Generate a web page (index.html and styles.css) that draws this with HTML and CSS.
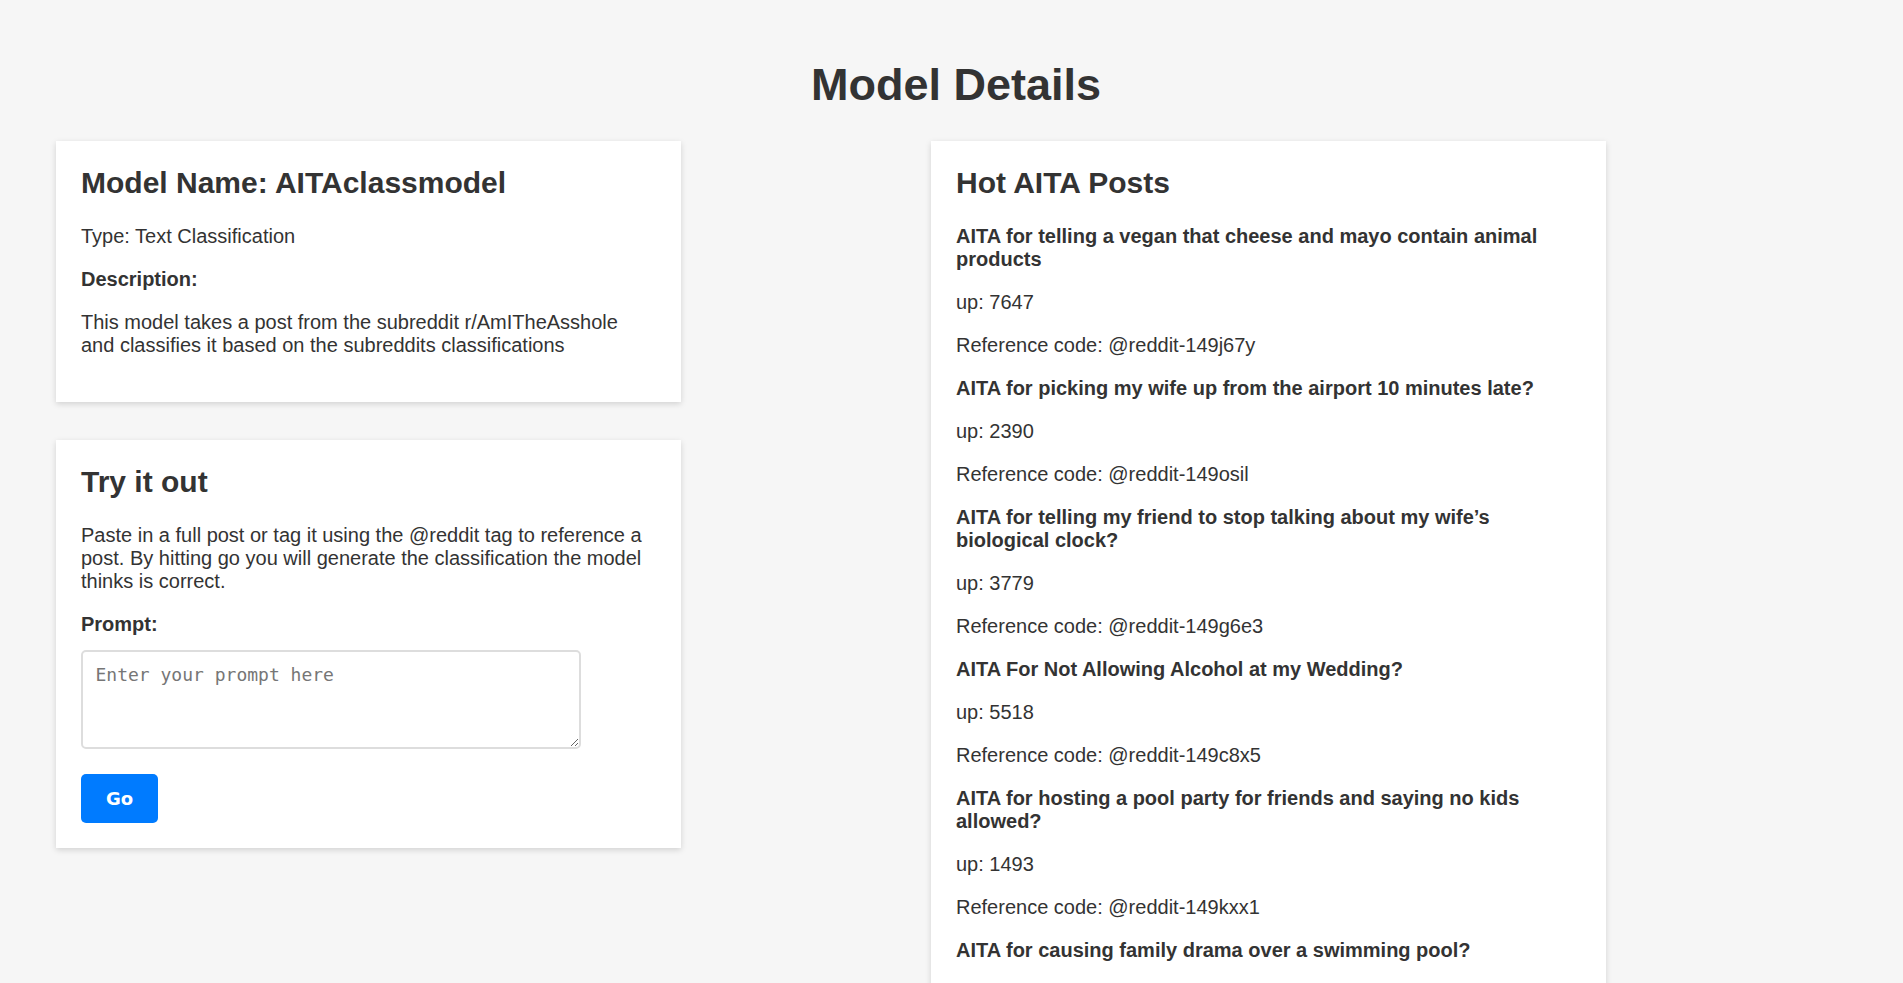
FILE: index.html
```html
<!DOCTYPE html>
<html lang="en">
<head>
<meta charset="utf-8">
<title>Model Details</title>
<link rel="stylesheet" href="styles.css">
</head>
<body>
  <h1 class="page-title">Model Details</h1>
  <main class="layout">
    <div class="left-col">
      <section class="card">
        <h2 class="card-title">Model Name: AITAclassmodel</h2>
        <p class="text">Type: Text Classification</p>
        <p class="text bold">Description:</p>
        <p class="text">This model takes a post from the subreddit r/AmITheAsshole and classifies it based on the subreddits classifications</p>
      </section>
      <section class="card">
        <h2 class="card-title">Try it out</h2>
        <p class="text">Paste in a full post or tag it using the @reddit tag to reference a post. By hitting go you will generate the classification the model thinks is correct.</p>
        <label class="prompt-label" for="prompt">Prompt:</label>
        <textarea id="prompt" class="prompt-input" placeholder="Enter your prompt here"></textarea>
        <button class="go-btn" type="button">Go</button>
      </section>
    </div>
    <section class="card posts-card">
      <h2 class="card-title">Hot AITA Posts</h2>
      <p class="text bold">AITA for telling a vegan that cheese and mayo contain animal products</p>
      <p class="text">up: 7647</p>
      <p class="text">Reference code: @reddit-149j67y</p>
      <p class="text bold">AITA for picking my wife up from the airport 10 minutes late?</p>
      <p class="text">up: 2390</p>
      <p class="text">Reference code: @reddit-149osil</p>
      <p class="text bold">AITA for telling my friend to stop talking about my wife’s biological clock?</p>
      <p class="text">up: 3779</p>
      <p class="text">Reference code: @reddit-149g6e3</p>
      <p class="text bold">AITA For Not Allowing Alcohol at my Wedding?</p>
      <p class="text">up: 5518</p>
      <p class="text">Reference code: @reddit-149c8x5</p>
      <p class="text bold">AITA for hosting a pool party for friends and saying no kids allowed?</p>
      <p class="text">up: 1493</p>
      <p class="text">Reference code: @reddit-149kxx1</p>
      <p class="text bold">AITA for causing family drama over a swimming pool?</p>
    </section>
  </main>
</body>
</html>
```
FILE: styles.css
```css
html {
  scrollbar-width: none;
}

body {
  margin: 0;
  padding-top: 59px;
  background: #f6f6f6;
  color: #333333;
  font-family: "Liberation Sans", Arial, sans-serif;
}

.page-title {
  margin: 0 0 30px;
  padding-left: 9px;
  text-align: center;
  font-size: 45px;
  font-weight: bold;
  line-height: normal;
}

.layout {
  display: flex;
  align-items: flex-start;
  gap: 250px;
  padding-left: 56px;
}

.left-col {
  display: flex;
  flex-direction: column;
  gap: 37.5px;
  width: 625px;
}

.card {
  box-sizing: border-box;
  background: #ffffff;
  padding: 25px;
  box-shadow: 0 2px 6px rgba(0, 0, 0, 0.15);
}

.posts-card {
  width: 675px;
}

.card-title {
  margin: 0 0 25px;
  font-size: 30px;
  font-weight: bold;
  line-height: normal;
}

.text {
  margin: 20px 0;
  font-size: 20px;
  line-height: normal;
}

.bold {
  font-weight: bold;
}

.prompt-label {
  display: block;
  margin-bottom: 14px;
  font-size: 20px;
  font-weight: bold;
  line-height: normal;
}

.prompt-input {
  display: block;
  box-sizing: border-box;
  width: 500px;
  height: 99px;
  margin: 0;
  padding: 12.5px;
  border: 2px solid #dddddd;
  border-radius: 5px;
  font-family: "DejaVu Sans Mono", monospace;
  font-size: 18px;
  color: #333333;
  background: #ffffff;
}

.prompt-input::placeholder {
  color: #767676;
}

.go-btn {
  display: block;
  height: 49px;
  margin-top: 25px;
  padding: 0 25px;
  border: none;
  border-radius: 5px;
  background: #007bff;
  color: #ffffff;
  font-family: "DejaVu Sans", sans-serif;
  font-size: 18px;
  font-weight: bold;
  cursor: pointer;
}
```
